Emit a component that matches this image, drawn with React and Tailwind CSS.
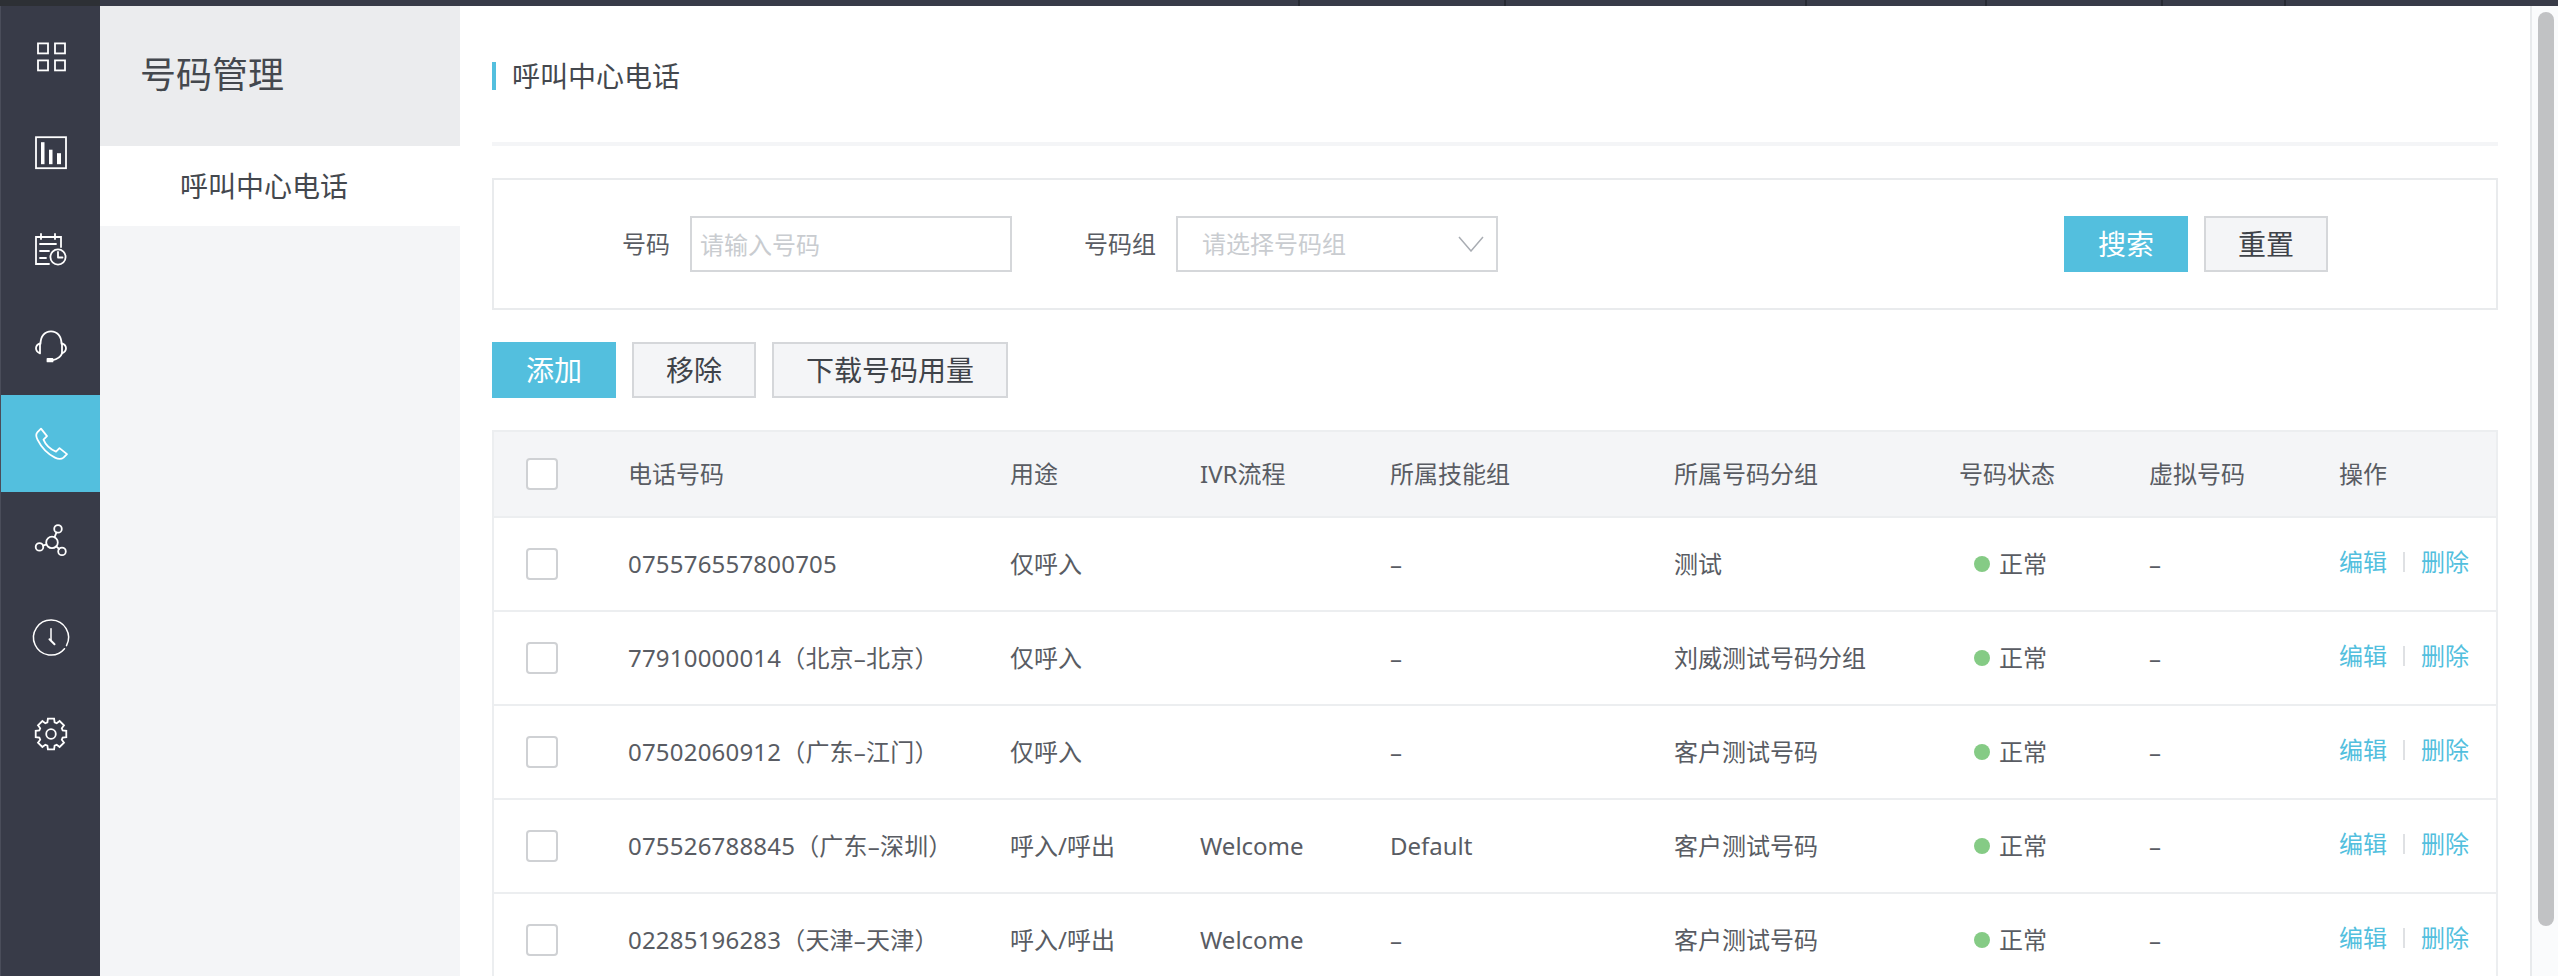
import React from "react";

// eight-tooth cog outline around (28, 29)
const gearPoints = (() => {
  const pts = [];
  for (let i = 0; i < 8; i++) {
    const a = (i * Math.PI) / 4 - Math.PI / 2;
    const at = (r, d) => `${(28 + r * Math.cos(a + d)).toFixed(2)},${(29 + r * Math.sin(a + d)).toFixed(2)}`;
    pts.push(at(12.2, -0.3), at(15.6, -0.2), at(15.6, 0.2), at(12.2, 0.3));
  }
  return pts.join(" ");
})();

const Svg = ({ box, children }) => (
  <svg
    width="60"
    height="60"
    viewBox={box}
    fill="none"
    stroke="#fff"
    strokeWidth="1.8"
    strokeLinecap="round"
    strokeLinejoin="round"
  >
    {children}
  </svg>
);

const navIcons = [
  <Svg box="-2 -0.4 60 60">
    <rect x="15" y="18" width="10" height="10" strokeLinejoin="miter" />
    <rect x="32" y="18" width="10" height="10" strokeLinejoin="miter" />
    <rect x="15" y="35" width="10" height="10" strokeLinejoin="miter" />
    <rect x="32" y="35" width="10" height="10" strokeLinejoin="miter" />
  </Svg>,
  <Svg box="-2 -0.2 60 60">
    <rect x="13" y="15" width="30" height="31" strokeLinejoin="miter" />
    <rect x="18" y="20" width="3.5" height="22" fill="#fff" stroke="none" />
    <rect x="26" y="27.5" width="3.5" height="14.5" fill="#fff" stroke="none" />
    <rect x="34" y="31" width="4" height="11" fill="#fff" stroke="none" />
  </Svg>,
  <Svg box="-2 -1 60 60">
    <path d="M26 44H13V17H38V27" strokeLinejoin="miter" />
    <path d="M18 14V19M32 14V19" />
    <path d="M17 24H33M17 31H26M17 38H23" />
    <circle cx="35" cy="37" r="7.6" />
    <path d="M35 32V37.5H39.5" />
  </Svg>,
  <Svg box="-2 -3.8 60 60">
    <path d="M17.5 24C17.5 16 22 11.5 28 11.5S38.5 16 38.5 24" />
    <path d="M17 23.5C14.5 24.5 13 26 13 28.5S14.5 32.5 17 33.5Z" />
    <path d="M39 23.5C41.5 24.5 43 26 43 28.5S41.5 32.5 39 33.5Z" />
    <path d="M39 33.5C38 37 35 39.5 29 40.5" />
    <rect x="24.5" y="39" width="5" height="2.6" fill="#fff" />
  </Svg>,
  <Svg box="-2 -1.6 60 60">
    <path d="M14.5 17.5L18 14L24 21.5L20.5 25C22.5 30 27 34.5 33 37L36.5 33.5L44 39.5L40.5 43C38 45 35 44.5 32 43C25 39.5 18 32 14.5 25C13 22 13 19 14.5 17.5Z" />
  </Svg>,
  <Svg box="-2 0.6 60 60">
    <circle cx="29" cy="32" r="5.8" />
    <circle cx="35" cy="18.5" r="3.8" />
    <circle cx="16.5" cy="36.5" r="3.8" />
    <circle cx="39" cy="41" r="3.8" />
    <path d="M31.5 27L33.5 22M23.5 34L20 35.2M33.3 36L36.2 38.6" />
  </Svg>,
  <Svg box="-2 -0.2 60 60">
    <path d="M41.5 40.5A17.5 17.5 0 1 1 43.5 37.5" strokeWidth="1.5" />
    <path d="M28 20.5V32" strokeWidth="1.5" />
    <path d="M26.5 31L31.5 36" strokeWidth="2" />
  </Svg>,
  <Svg box="-2 0 60 60">
    <polygon points={gearPoints} strokeLinejoin="miter" />
    <circle cx="28" cy="29" r="4.8" />
  </Svg>,
];

const rows = [
  { phone: "075576557800705", use: "仅呼入", ivr: "", skill: "–", group: "测试" },
  { phone: "77910000014（北京–北京）", use: "仅呼入", ivr: "", skill: "–", group: "刘威测试号码分组" },
  { phone: "07502060912（广东–江门）", use: "仅呼入", ivr: "", skill: "–", group: "客户测试号码" },
  { phone: "075526788845（广东–深圳）", use: "呼入/呼出", ivr: "Welcome", skill: "Default", group: "客户测试号码" },
  { phone: "02285196283（天津–天津）", use: "呼入/呼出", ivr: "Welcome", skill: "–", group: "客户测试号码" },
];

const Checkbox = () => (
  <input type="checkbox" className="w-8 h-8 appearance-none bg-white border-2 border-[#cfd1d4] rounded-[4px] ml-8" />
);

const gridCols = "grid grid-cols-[134px_382px_190px_190px_284px_285px_190px_190px_1fr] items-center";

const App = () => {
  return (
    <div className="h-[976px] w-[2558px] overflow-hidden flex flex-col bg-white text-[24px] text-[#595c63] [font-family:'Noto_Sans','Noto_Sans_CJK_SC',sans-serif]">
      {/* top strip */}
      <div className="h-[6px] shrink-0 flex bg-[#383b48]">
        <div className="w-[100px] bg-[#2d3035]" />
        <div className="w-[1200px] border-r-2 border-[#272a33]" />
        <div className="w-[206px] border-r-2 border-[#272a33]" />
        <div className="w-[301px] border-r-2 border-[#272a33]" />
        <div className="w-[180px] border-r-2 border-[#272a33]" />
        <div className="w-[176px] border-r-2 border-[#272a33]" />
        <div className="w-[123px] border-r-2 border-[#272a33]" />
      </div>

      <div className="flex flex-1 min-h-0">
        {/* icon rail */}
        <div className="w-[100px] shrink-0 bg-[#383b48] border-l border-[#4a4d5a]">
          {navIcons.map((icon, i) => (
            <div key={i} className={`h-[97.2px] flex items-center justify-center ${i === 4 ? "bg-[#53bfde]" : ""}`}>
              {icon}
            </div>
          ))}
        </div>

        {/* secondary menu */}
        <div className="w-[360px] shrink-0 bg-[#f4f5f7]">
          <div className="h-[140px] bg-[#ebecee] flex items-center pl-[40px] pb-[2px] text-[36px] text-[#44484e]">号码管理</div>
          <div className="h-[80px] bg-white flex items-center pl-[80px] text-[28px] text-[#44484e]">呼叫中心电话</div>
        </div>

        {/* main */}
        <div className="flex-1 min-w-0 px-8">
          <div className="h-[140px] border-b-4 border-[#f4f5f7] pt-[56px]">
            <div className="h-[28px] border-l-4 border-[#53bfde] pl-[16px] flex items-center text-[28px] leading-none text-[#44484e]">呼叫中心电话</div>
          </div>

          <div className="mt-8 h-[132px] border-2 border-[#e9ebed] flex items-center pl-[128px]">
            <span className="mr-[20px]">号码</span>
            <input
              placeholder="请输入号码"
              className="w-[322px] h-[56px] border-2 border-[#d5d7da] pl-[8px] outline-none text-[24px] placeholder:text-[#c9ccd0]"
            />
            <span className="ml-[72px] mr-[20px]">号码组</span>
            <div className="w-[322px] h-[56px] border-2 border-[#d5d7da] pl-[24px] pr-[12px] flex items-center justify-between text-[#c9ccd0]">
              <span>请选择号码组</span>
              <svg width="26" height="16" viewBox="0 0 26 16" fill="none" stroke="#a9adb3" strokeWidth="1.5">
                <path d="M1 1L13 15L25 1" />
              </svg>
            </div>
            <button className="ml-auto w-[124px] h-[56px] bg-[#53bfde] text-white text-[28px]">搜索</button>
            <button className="ml-4 mr-[168px] w-[124px] h-[56px] bg-[#f4f5f7] border-2 border-[#d5d7da] text-[#3f4349] text-[28px]">重置</button>
          </div>

          <div className="mt-8 flex gap-4 text-[28px] text-[#3f4349]">
            <button className="w-[124px] h-[56px] bg-[#53bfde] text-white">添加</button>
            <button className="w-[124px] h-[56px] bg-[#f4f5f7] border-2 border-[#d5d7da]">移除</button>
            <button className="w-[236px] h-[56px] bg-[#f4f5f7] border-2 border-[#d5d7da]">下载号码用量</button>
          </div>

          {/* table */}
          <div className="mt-8 border-x-2 border-t-2 border-[#eceef0]">
            <div className={`${gridCols} h-[86px] bg-[#f4f5f7] border-b-2 border-[#eceef0]`}>
              <Checkbox />
              {["电话号码", "用途", "IVR流程", "所属技能组", "所属号码分组", "号码状态", "虚拟号码", "操作"].map((h) => (
                <div key={h}>{h}</div>
              ))}
            </div>
            {rows.map((r) => (
              <div key={r.phone} className={`${gridCols} h-[94px] border-b-2 border-[#eceef0]`}>
                <Checkbox />
                <div className="tracking-[0.2px]">{r.phone}</div>
                <div>{r.use}</div>
                <div>{r.ivr}</div>
                <div>{r.skill}</div>
                <div>{r.group}</div>
                <div className="flex items-center pl-[15px]">
                  <span className="w-4 h-4 rounded-full bg-[#85cb85] mr-[9px]" />
                  正常
                </div>
                <div>–</div>
                <div className="flex items-center text-[#53bfde] pb-[4px]">
                  编辑
                  <span className="w-[2px] h-5 bg-[#dfe1e4] mx-[16px]" />
                  删除
                </div>
              </div>
            ))}
          </div>
        </div>

        {/* scrollbar */}
        <div className="w-[28px] shrink-0 bg-[#fafbfc] border-l-2 border-[#e8eaec] pl-[6px] pt-[6px]">
          <div className="w-4 h-[914px] rounded-full bg-[#c1c2c4]" />
        </div>
      </div>
    </div>
  );
};

export default App;
